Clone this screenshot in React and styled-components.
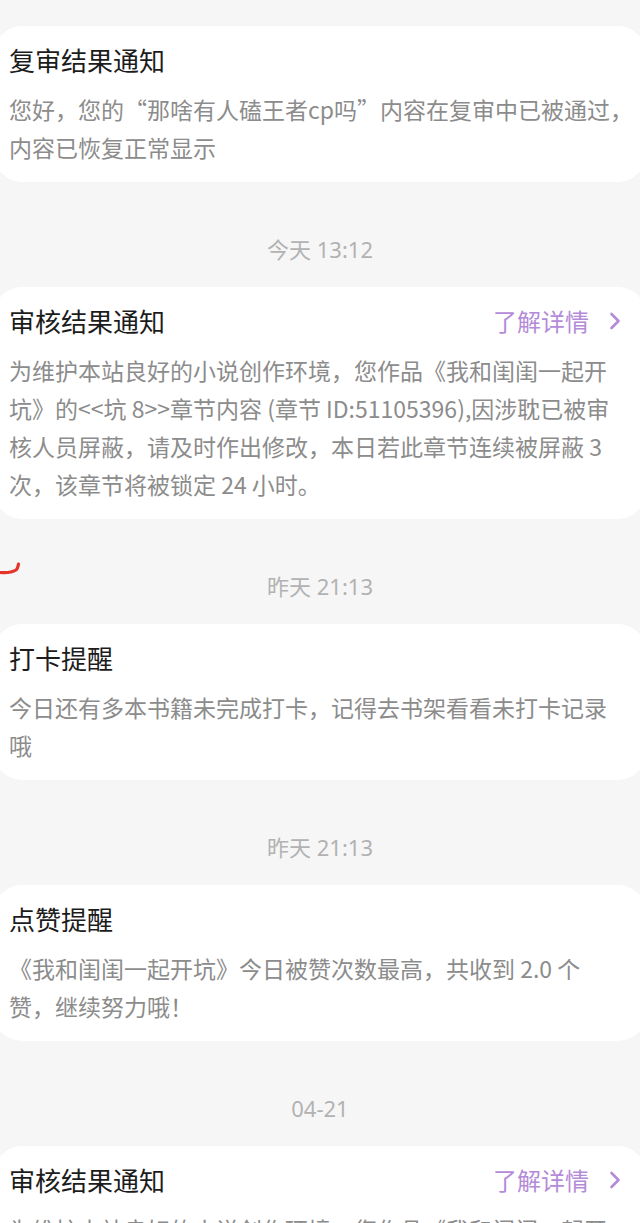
import React from "react";
import styled, { createGlobalStyle } from "styled-components";

const Global = createGlobalStyle`
  html, body { margin: 0; padding: 0; background: #f6f6f6; }
  body { font-family: "Noto Sans CJK SC", "Noto Sans", sans-serif; }
`;

const Page = styled.div`
  position: relative;
  width: 640px;
  min-height: 1223px;
  overflow: hidden;
  background: #f6f6f6;
  padding-top: 26px;
  box-sizing: border-box;
`;

const Card = styled.section`
  margin: 0 -6px;
  padding: 19px 25px 16px 15px;
  background: #ffffff;
  border-radius: 28px;
`;

const Header = styled.div`
  display: flex;
  align-items: center;
  justify-content: space-between;
  height: 30px;
`;

const Title = styled.h3`
  margin: 0;
  font-size: 26px;
  font-weight: 400;
  line-height: 30px;
  color: #1c1c1c;
`;

const Detail = styled.a`
  display: flex;
  align-items: center;
  gap: 20px;
  font-size: 24px;
  line-height: 30px;
  color: #b48bd8;
  text-decoration: none;
`;

const Body = styled.div`
  margin-top: 15px;
  font-size: 23px;
  line-height: 38px;
  color: #8c8c8c;
`;

const Line = styled.div`
  white-space: nowrap;
`;

const TimeRow = styled.div`
  padding: 55px 0 26px;
  text-align: center;
  font-family: "Noto Sans", "Noto Sans CJK SC", sans-serif;
  font-size: 22px;
  line-height: 24px;
  color: #b2b2b2;
`;

const Mark = styled.svg`
  position: absolute;
  left: 0;
  top: 560px;
`;

const Chevron = () => (
  <svg width="12" height="18" viewBox="0 0 12 18" fill="none">
    <path d="M2.5 2 L9.5 9 L2.5 16" stroke="#b48bd8" strokeWidth="2.6" strokeLinecap="round" strokeLinejoin="round" />
  </svg>
);

const items = [
  {
    title: "复审结果通知",
    lines: ["您好，您的“那啥有人磕王者cp吗”内容在复审中已被通过，", "内容已恢复正常显示"],
  },
  {
    time: "今天 13:12",
    title: "审核结果通知",
    link: true,
    lines: [
      "为维护本站良好的小说创作环境，您作品《我和闺闺一起开",
      "坑》的<<坑 8>>章节内容 (章节 ID:51105396),因涉耽已被审",
      "核人员屏蔽，请及时作出修改，本日若此章节连续被屏蔽 3",
      "次，该章节将被锁定 24 小时。",
    ],
  },
  {
    time: "昨天 21:13",
    title: "打卡提醒",
    lines: ["今日还有多本书籍未完成打卡，记得去书架看看未打卡记录", "哦"],
  },
  {
    time: "昨天 21:13",
    title: "点赞提醒",
    lines: ["《我和闺闺一起开坑》今日被赞次数最高，共收到 2.0 个", "赞，继续努力哦！"],
  },
  {
    time: "04-21",
    title: "审核结果通知",
    link: true,
    lines: ["为维护本站良好的小说创作环境，您作品《我和闺闺一起开"],
  },
];

export default function App() {
  return (
    <>
      <Global />
      <Page>
        {items.map((it, i) => (
          <React.Fragment key={i}>
            {it.time && <TimeRow>{it.time}</TimeRow>}
            <Card>
              <Header>
                <Title>{it.title}</Title>
                {it.link && (
                  <Detail>
                    了解详情
                    <Chevron />
                  </Detail>
                )}
              </Header>
              <Body>
                {it.lines.map((l, j) => (
                  <Line key={j}>{l}</Line>
                ))}
              </Body>
            </Card>
          </React.Fragment>
        ))}
        <Mark width="22" height="18" viewBox="0 0 22 18" fill="none">
          <path d="M0 12.5 C6 13 12 12.5 16 10 C17.5 9 18 7 18.5 4" stroke="#e5342c" strokeWidth="3.2" strokeLinecap="round" />
        </Mark>
      </Page>
    </>
  );
}
